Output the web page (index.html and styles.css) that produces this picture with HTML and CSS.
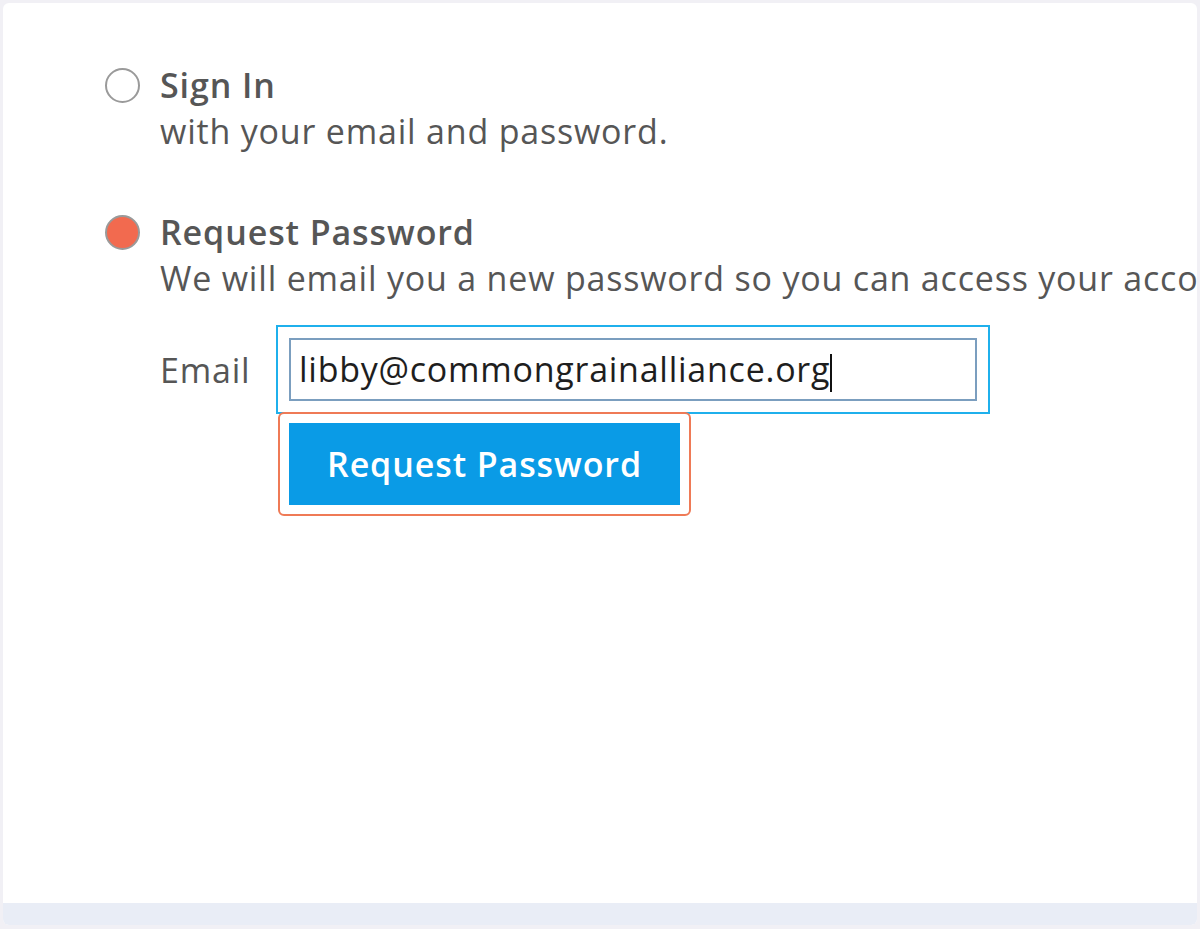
FILE: index.html
```html
<!DOCTYPE html>
<html lang="en">
<head>
<meta charset="UTF-8">
<title>Request Password</title>
<link rel="stylesheet" href="styles.css">
</head>
<body>

<div class="card">
    <div class="content">
        <div class="option">
            <span class="radio"></span>
            <div class="option-text">
                <div class="option-title">Sign In</div>
                <div class="option-desc">with your email and password.</div>
            </div>
        </div>

        <div class="option">
            <span class="radio checked"></span>
            <div class="option-text">
                <div class="option-title">Request Password</div>
                <div class="option-desc">We will email you a new password so you can access your account.</div>

                <div class="email-row">
                    <label class="email-label" for="email">Email</label>
                    <div class="focus-ring">
                        <div class="email-input" id="email">libby@commongrainalliance.org<span class="caret"></span></div>
                    </div>
                </div>
                <div class="btn-ring">
                    <button class="btn">Request Password</button>
                </div>
            </div>
        </div>
    </div>
    <div class="card-footer"></div>
</div>

</body>
</html>
```

FILE: styles.css
```css
html, body {
    margin: 0;
    padding: 0;
}
body {
    background-color: #f1f0f5;
    font-family: "Open Sans", sans-serif;
    color: #565656;
    padding: 3px;
    overflow: hidden;
}
.card {
    height: 922px;
    background-color: #fff;
    border-radius: 6px;
    display: flex;
    flex-direction: column;
}
.content {
    flex: 1;
    padding: 59px 0 0 102px;
    white-space: nowrap;
}
.card-footer {
    height: 22px;
    background-color: #e9edf6;
    border-radius: 0 0 6px 6px;
}
.option {
    display: flex;
    gap: 20px;
    margin-bottom: 55px;
}
.radio {
    flex: none;
    width: 31px;
    height: 31px;
    margin-top: 6px;
    border: 2px solid #9a9a9a;
    border-radius: 50%;
    background-color: #fff;
}
.radio.checked {
    background-color: #f26a4f;
}
.option-title {
    font-size: 34px;
    font-weight: 600;
    letter-spacing: 0.9px;
    line-height: 46px;
}
.option-desc {
    font-size: 34px;
    letter-spacing: 0.8px;
    line-height: 46px;
}
.email-row {
    display: flex;
    align-items: center;
    margin-top: 24px;
}
.email-label {
    width: 116px;
    font-size: 34px;
    letter-spacing: 0.8px;
}
.focus-ring {
    border: 2px solid #1fb0ec;
    padding: 11px;
}
.email-input {
    width: 668px;
    height: 59px;
    border: 2px solid #7b9ebf;
    padding: 0 8px;
    font-size: 34px;
    letter-spacing: 0.75px;
    line-height: 59px;
    color: #1e1e1e;
}
.caret {
    display: inline-block;
    width: 2px;
    height: 38px;
    vertical-align: middle;
    background-color: #111;
}
.btn-ring {
    display: inline-block;
    margin: -2px 0 0 118px;
    padding: 9px;
    border: 2px solid #ef7a56;
    border-radius: 6px;
}
.btn {
    display: block;
    width: 391px;
    height: 82px;
    border: none;
    background-color: #0a9be6;
    color: #fff;
    font-family: "Open Sans", sans-serif;
    font-size: 34px;
    font-weight: 600;
    letter-spacing: 0.9px;
}
```
